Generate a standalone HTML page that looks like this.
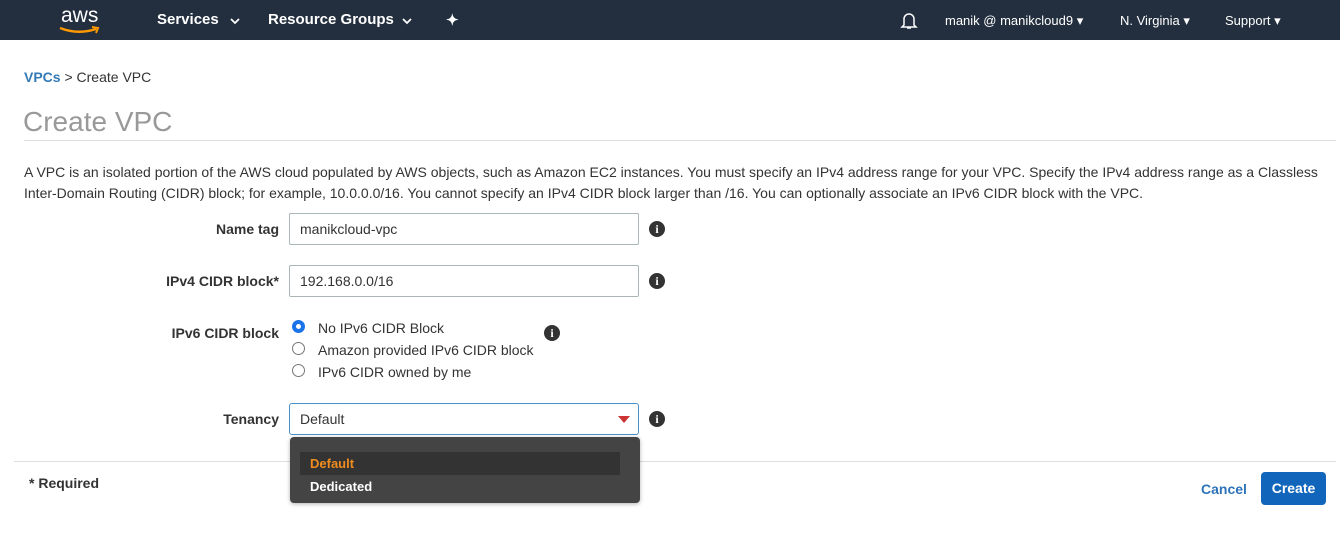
<!DOCTYPE html>
<html><head><meta charset="utf-8"><style>
*{box-sizing:border-box}
body{margin:0;width:1340px;height:536px;background:#fff;font-family:"Liberation Sans",Arial,sans-serif;position:relative;overflow:hidden;color:#333}
.nav{position:absolute;left:0;top:0;width:1340px;height:40px;background:#232f3e;color:#fff;font-weight:bold;font-size:15px}
.nav span{position:absolute;top:11px}
.r{font-size:13px;font-weight:normal}
.abs{position:absolute}
.lbl{position:absolute;font-weight:bold;font-size:14px;text-align:right;right:1061px}
.inp{position:absolute;left:289px;width:350px;height:32px;border:1px solid #aab7b8;border-radius:2px;font-size:14px;padding:7px 10px}
.info{position:absolute;width:16px;height:16px;border-radius:50%;background:#333;color:#fff;font:bold 12px "Liberation Serif",serif;text-align:center;line-height:16px}
.rad{position:absolute;left:292px;width:13px;height:13px;border:1px solid #777;border-radius:50%}
.rt{position:absolute;left:318px;font-size:14px}
</style></head><body>
<div class="nav">
<span style="left:61px;top:4px;font-size:21px;font-weight:normal">aws</span>
<svg class="abs" style="left:58px;top:26px" width="44" height="10"><path d="M2 2 Q20 9 38 3" stroke="#f90" stroke-width="2.5" fill="none"/><path d="M34 1 L40 2 L38 7" stroke="#f90" stroke-width="2" fill="none"/></svg>
<span style="left:157px">Services</span>
<svg class="abs" style="left:230px;top:18px" width="10" height="7"><path d="M1 1 L5 5 L9 1" stroke="#fff" stroke-width="1.8" fill="none"/></svg>
<span style="left:268px">Resource Groups</span>
<svg class="abs" style="left:402px;top:18px" width="10" height="7"><path d="M1 1 L5 5 L9 1" stroke="#fff" stroke-width="1.8" fill="none"/></svg>
<span style="left:446px">✦</span>
<svg class="abs" style="left:900px;top:11px" width="18" height="19"><path d="M4 14 V8 a5 5 0 0 1 10 0 V14 L16 16 H2 Z M7 17 h4" stroke="#fff" stroke-width="1.5" fill="none"/></svg>
<span class="r" style="left:945px;top:13px">manik @ manikcloud9 ▾</span>
<span class="r" style="left:1120px;top:13px">N. Virginia ▾</span>
<span class="r" style="left:1225px;top:13px">Support ▾</span>
</div>
<div class="abs" style="left:24px;top:69px;font-size:14px"><b style="color:#337ab7">VPCs</b> &gt; Create VPC</div>
<div class="abs" style="left:23px;top:106px;font-size:28px;color:#999">Create VPC</div>
<div class="abs" style="left:24px;top:140px;width:1312px;border-top:1px solid #ddd"></div>
<div class="abs" style="left:24px;top:162px;width:1310px;font-size:14px;line-height:21px">A VPC is an isolated portion of the AWS cloud populated by AWS objects, such as Amazon EC2 instances. You must specify an IPv4 address range for your VPC. Specify the IPv4 address range as a Classless Inter-Domain Routing (CIDR) block; for example, 10.0.0.0/16. You cannot specify an IPv4 CIDR block larger than /16. You can optionally associate an IPv6 CIDR block with the VPC.</div>
<div class="lbl" style="top:221px">Name tag</div>
<div class="inp" style="top:213px">manikcloud-vpc</div><div class="info" style="left:649px;top:221px">i</div>
<div class="lbl" style="top:273px">IPv4 CIDR block*</div>
<div class="inp" style="top:265px">192.168.0.0/16</div><div class="info" style="left:649px;top:273px">i</div>
<div class="lbl" style="top:325px">IPv6 CIDR block</div>
<div class="rad" style="top:320px;border:4px solid #1a73e8"></div><div class="rt" style="top:320px">No IPv6 CIDR Block</div>
<div class="rad" style="top:342px"></div><div class="rt" style="top:342px">Amazon provided IPv6 CIDR block</div>
<div class="rad" style="top:364px"></div><div class="rt" style="top:364px">IPv6 CIDR owned by me</div>
<div class="info" style="left:544px;top:325px">i</div>
<div class="lbl" style="top:411px">Tenancy</div>
<div class="inp" style="top:403px;border-color:#4a90c8;border-radius:3px">Default</div>
<div class="abs" style="left:618px;top:416px;width:0;height:0;border:6px solid transparent;border-top:7px solid #c33"></div>
<div class="info" style="left:649px;top:411px">i</div>
<div class="abs" style="left:14px;top:461px;width:1322px;border-top:1px solid #ddd"></div>
<div class="abs" style="left:290px;top:437px;width:350px;height:66px;background:#444;border-radius:4px;box-shadow:0 1px 4px rgba(0,0,0,.3)"></div>
<div class="abs" style="left:300px;top:452px;width:320px;height:23px;background:#333"></div>
<div class="abs" style="left:310px;top:456px;font-size:13px;font-weight:bold;color:#f08c1e">Default</div>
<div class="abs" style="left:310px;top:479px;font-size:13px;font-weight:bold;color:#fff">Dedicated</div>
<div class="abs" style="left:29px;top:475px;font-size:14px;font-weight:bold">* Required</div>
<div class="abs" style="left:1201px;top:481px;font-size:14px;font-weight:bold;color:#2e73b8">Cancel</div>
<div class="abs" style="left:1261px;top:472px;width:65px;height:33px;background:#1166bb;border-radius:4px;color:#fff;font-size:14px;font-weight:bold;text-align:center;line-height:33px">Create</div>
</body></html>
